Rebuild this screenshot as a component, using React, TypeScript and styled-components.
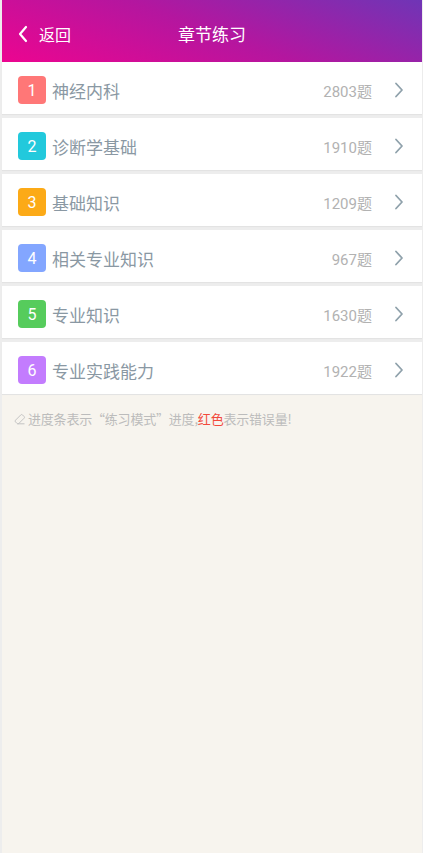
import styled, { createGlobalStyle } from "styled-components";

const GlobalStyle = createGlobalStyle`
  html, body {
    margin: 0;
    padding: 0;
    background: #ededed;
  }
  body {
    font-family: "Noto Sans CJK SC", "Noto Sans", sans-serif;
  }
`;

type Chapter = {
  name: string;
  count: number;
  color: string;
};

const chapters: Chapter[] = [
  { name: "神经内科", count: 2803, color: "#ff7777" },
  { name: "诊断学基础", count: 1910, color: "#22c9dc" },
  { name: "基础知识", count: 1209, color: "#fcaa17" },
  { name: "相关专业知识", count: 967, color: "#83a6ff" },
  { name: "专业知识", count: 1630, color: "#56cc5c" },
  { name: "专业实践能力", count: 1922, color: "#c37cfe" },
];

const Page = styled.div`
  min-height: 853px;
  margin: 0 1px 0 2px;
  background: #f7f4ee;
  display: flex;
  flex-direction: column;
`;

const Header = styled.header`
  height: 62px;
  display: grid;
  grid-template-columns: 1fr auto 1fr;
  align-items: center;
  padding: 5px 0 0;
  box-sizing: border-box;
  background: linear-gradient(20deg, #ec0590 0%, #b4169f 50%, #6f35b6 100%);
  color: #fff;
`;

const Back = styled.div`
  display: flex;
  align-items: center;
  gap: 10px;
  padding-left: 15px;
  font-size: 16px;
`;

const Title = styled.h1`
  margin: 0;
  font-size: 17px;
  font-weight: 400;
`;

const List = styled.div`
  display: flex;
  flex-direction: column;
  gap: 4px;
  background: #ededed;
  padding-bottom: 1px;
`;

const Row = styled.div`
  height: 52px;
  display: flex;
  align-items: center;
  padding: 4px 17px 0 16px;
  box-sizing: border-box;
  background: #fff;
  box-shadow: 0 1px 1px rgba(0, 0, 0, 0.04);
`;

const Badge = styled.span<{ $color: string }>`
  width: 28px;
  height: 28px;
  border-radius: 4px;
  background: ${(p) => p.$color};
  color: #fff;
  font-family: Roboto, "Noto Sans CJK SC", sans-serif;
  font-size: 16px;
  display: flex;
  align-items: center;
  justify-content: center;
  margin-right: 6px;
`;

const Name = styled.span`
  flex: 1;
  font-size: 17px;
  color: #8a98a3;
`;

const Count = styled.span`
  font-family: Roboto, "Noto Sans CJK SC", sans-serif;
  font-size: 15px;
  color: #b2b2b2;
  margin-right: 21px;
`;

const Note = styled.p`
  margin: 0;
  padding: 14px 0 0 12px;
  display: flex;
  align-items: center;
  gap: 2px;
  font-size: 13px;
  letter-spacing: -0.2px;
  color: #bcbcbc;
`;

const Red = styled.span`
  color: #f2493b;
`;

const BackIcon = () => (
  <svg width="12" height="18" viewBox="0 0 12 18">
    <path d="M9 2 L3 9 L9 16" fill="none" stroke="#fff" strokeWidth="2.2" strokeLinecap="round" strokeLinejoin="round" />
  </svg>
);

const Chevron = () => (
  <svg width="12" height="18" viewBox="0 0 12 18">
    <path d="M3 2.5 L9 9 L3 15.5" fill="none" stroke="#8fa1ab" strokeWidth="1.8" strokeLinecap="round" strokeLinejoin="round" />
  </svg>
);

const TagIcon = () => (
  <svg width="12" height="12" viewBox="0 0 12 12">
    <path
      d="M1.5 7.2 L6.8 1.9 a1.2 1.2 0 0 1 1.7 0 l1.6 1.6 a1.2 1.2 0 0 1 0 1.7 L4.8 10.5 a1.2 1.2 0 0 1 -1.7 0 l-1.6 -1.6 a1.2 1.2 0 0 1 0 -1.7 Z M3.5 10.8 L10.5 10.8"
      fill="none"
      stroke="#c4c4c4"
      strokeWidth="1"
    />
  </svg>
);

export default function App() {
  return (
    <>
      <GlobalStyle />
      <Page>
        <Header>
          <Back>
            <BackIcon />
            <span>返回</span>
          </Back>
          <Title>章节练习</Title>
          <div />
        </Header>
        <List>
          {chapters.map((c, i) => (
            <Row key={c.name}>
              <Badge $color={c.color}>{i + 1}</Badge>
              <Name>{c.name}</Name>
              <Count>{c.count}题</Count>
              <Chevron />
            </Row>
          ))}
        </List>
        <Note>
          <TagIcon />
          <span>
            进度条表示“练习模式”进度,<Red>红色</Red>表示错误量!
          </span>
        </Note>
      </Page>
    </>
  );
}
